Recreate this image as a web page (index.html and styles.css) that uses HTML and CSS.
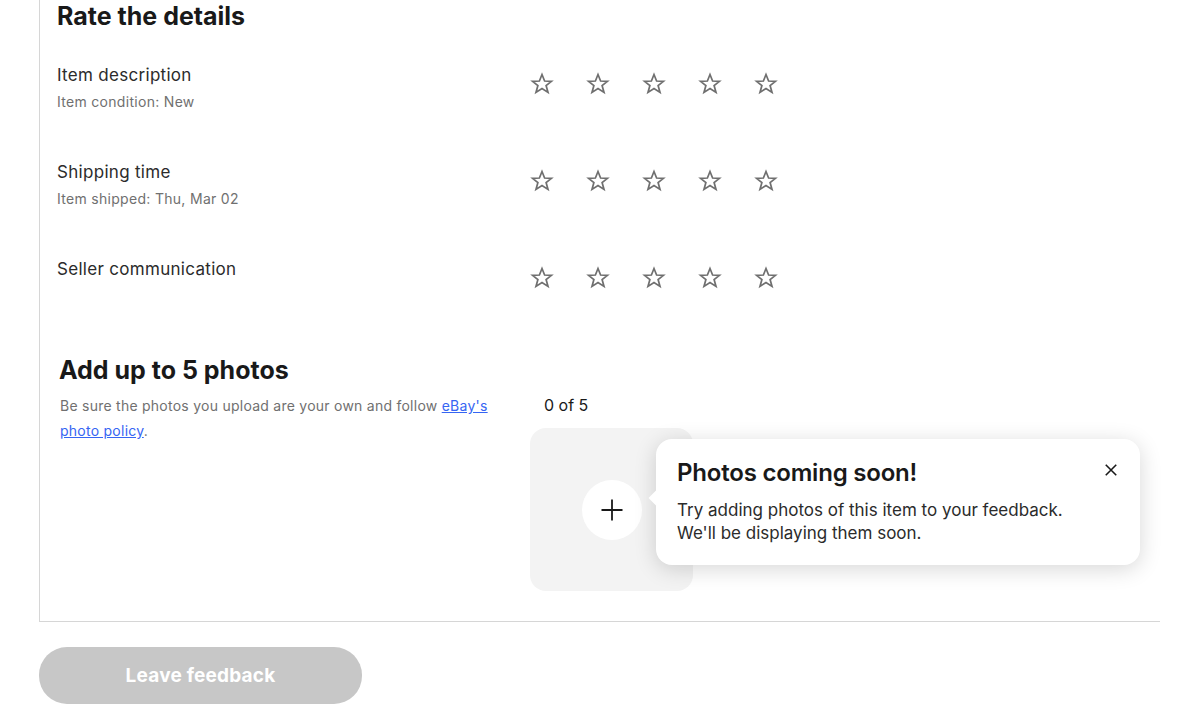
FILE: index.html
```html
<!DOCTYPE html>
<html lang="en">
<head>
    <meta charset="UTF-8">
    <meta name="viewport" content="width=device-width, initial-scale=1.0">
    <title>Leave feedback</title>
    <link rel="stylesheet" href="styles.css">
</head>
<body>
    <div class="page">
        <div class="card">
            <h2 class="heading">Rate the details</h2>

            <!-- Oceny szczegolowe -->
            <div class="rate-row">
                <div class="rate-label">
                    <div class="rate-title">Item description</div>
                    <div class="rate-sub">Item condition: New</div>
                </div>
                <div class="stars">
                    <svg class="star" viewBox="0 0 24 24"><polygon points="12,2.5 14.6,9 21.5,9.3 16.1,13.6 18,20.4 12,16.5 6,20.4 7.9,13.6 2.5,9.3 9.4,9"/></svg>
                    <svg class="star" viewBox="0 0 24 24"><polygon points="12,2.5 14.6,9 21.5,9.3 16.1,13.6 18,20.4 12,16.5 6,20.4 7.9,13.6 2.5,9.3 9.4,9"/></svg>
                    <svg class="star" viewBox="0 0 24 24"><polygon points="12,2.5 14.6,9 21.5,9.3 16.1,13.6 18,20.4 12,16.5 6,20.4 7.9,13.6 2.5,9.3 9.4,9"/></svg>
                    <svg class="star" viewBox="0 0 24 24"><polygon points="12,2.5 14.6,9 21.5,9.3 16.1,13.6 18,20.4 12,16.5 6,20.4 7.9,13.6 2.5,9.3 9.4,9"/></svg>
                    <svg class="star" viewBox="0 0 24 24"><polygon points="12,2.5 14.6,9 21.5,9.3 16.1,13.6 18,20.4 12,16.5 6,20.4 7.9,13.6 2.5,9.3 9.4,9"/></svg>
                </div>
            </div>

            <div class="rate-row">
                <div class="rate-label">
                    <div class="rate-title">Shipping time</div>
                    <div class="rate-sub">Item shipped: Thu, Mar 02</div>
                </div>
                <div class="stars">
                    <svg class="star" viewBox="0 0 24 24"><polygon points="12,2.5 14.6,9 21.5,9.3 16.1,13.6 18,20.4 12,16.5 6,20.4 7.9,13.6 2.5,9.3 9.4,9"/></svg>
                    <svg class="star" viewBox="0 0 24 24"><polygon points="12,2.5 14.6,9 21.5,9.3 16.1,13.6 18,20.4 12,16.5 6,20.4 7.9,13.6 2.5,9.3 9.4,9"/></svg>
                    <svg class="star" viewBox="0 0 24 24"><polygon points="12,2.5 14.6,9 21.5,9.3 16.1,13.6 18,20.4 12,16.5 6,20.4 7.9,13.6 2.5,9.3 9.4,9"/></svg>
                    <svg class="star" viewBox="0 0 24 24"><polygon points="12,2.5 14.6,9 21.5,9.3 16.1,13.6 18,20.4 12,16.5 6,20.4 7.9,13.6 2.5,9.3 9.4,9"/></svg>
                    <svg class="star" viewBox="0 0 24 24"><polygon points="12,2.5 14.6,9 21.5,9.3 16.1,13.6 18,20.4 12,16.5 6,20.4 7.9,13.6 2.5,9.3 9.4,9"/></svg>
                </div>
            </div>

            <div class="rate-row">
                <div class="rate-label">
                    <div class="rate-title">Seller communication</div>
                </div>
                <div class="stars">
                    <svg class="star" viewBox="0 0 24 24"><polygon points="12,2.5 14.6,9 21.5,9.3 16.1,13.6 18,20.4 12,16.5 6,20.4 7.9,13.6 2.5,9.3 9.4,9"/></svg>
                    <svg class="star" viewBox="0 0 24 24"><polygon points="12,2.5 14.6,9 21.5,9.3 16.1,13.6 18,20.4 12,16.5 6,20.4 7.9,13.6 2.5,9.3 9.4,9"/></svg>
                    <svg class="star" viewBox="0 0 24 24"><polygon points="12,2.5 14.6,9 21.5,9.3 16.1,13.6 18,20.4 12,16.5 6,20.4 7.9,13.6 2.5,9.3 9.4,9"/></svg>
                    <svg class="star" viewBox="0 0 24 24"><polygon points="12,2.5 14.6,9 21.5,9.3 16.1,13.6 18,20.4 12,16.5 6,20.4 7.9,13.6 2.5,9.3 9.4,9"/></svg>
                    <svg class="star" viewBox="0 0 24 24"><polygon points="12,2.5 14.6,9 21.5,9.3 16.1,13.6 18,20.4 12,16.5 6,20.4 7.9,13.6 2.5,9.3 9.4,9"/></svg>
                </div>
            </div>

            <!-- Zdjecia -->
            <h2 class="heading photos-heading">Add up to 5 photos</h2>
            <div class="photos">
                <p class="photos-note">
                    Be sure the photos you upload are your own and follow <a href="#">eBay's photo policy</a>.
                </p>
                <div class="photos-upload">
                    <div class="photos-count">0 of 5</div>
                    <div class="tile">
                        <button class="add-btn" type="button" aria-label="Add photo">
                            <svg viewBox="0 0 24 24" width="24" height="24"><path d="M12 1.5v21M1.5 12h21" stroke="#191919" stroke-width="1.8" fill="none"/></svg>
                        </button>
                        <div class="tooltip">
                            <span class="tooltip-arrow"></span>
                            <div class="tooltip-title">Photos coming soon!</div>
                            <div class="tooltip-text">Try adding photos of this item to your feedback.<br>We'll be displaying them soon.</div>
                            <button class="tooltip-close" type="button" aria-label="Close">
                                <svg viewBox="0 0 16 16" width="14" height="14"><path d="M2 2l12 12M14 2L2 14" stroke="#191919" stroke-width="1.8" fill="none"/></svg>
                            </button>
                        </div>
                    </div>
                </div>
            </div>
        </div>

        <button class="submit" type="button" disabled>Leave feedback</button>
    </div>
</body>
</html>
```

FILE: styles.css
```css
body {
    margin: 0;
    font-family: Inter, "Open Sans", Arial, sans-serif;
    color: #191919;
    background: #fff;
}
.page {
    padding-left: 39px;
    width: 1121px;
}
.card {
    border-left: 1px solid #d6d6d6;
    border-bottom: 1px solid #d6d6d6;
    padding: 0 0 30px 17px;
}
.heading {
    margin: 0;
    font-size: 25px;
    line-height: 32px;
    font-weight: 700;
    letter-spacing: 0;
}
.rate-row {
    display: flex;
    height: 97px;
}
.rate-row:first-of-type {
    margin-top: 31px;
}
.rate-label {
    width: 473px;
}
.rate-title {
    font-size: 17px;
    line-height: 24px;
    letter-spacing: 0.3px;
    color: #2b2b2b;
}
.rate-sub {
    margin-top: 5px;
    font-size: 14px;
    line-height: 20px;
    letter-spacing: 0.3px;
    color: #707070;
}
.stars {
    display: flex;
    gap: 32px;
    padding-top: 9px;
    height: 24px;
}
.star {
    width: 24px;
    height: 24px;
    fill: none;
    stroke: #6f6f6f;
    stroke-width: 1.7;
    stroke-linejoin: miter;
}
.photos-heading {
    margin-left: 2px;
}
.photos {
    display: flex;
    margin-top: 7px;
}
.photos-note {
    width: 445px;
    margin: 0 25px 0 3px;
    font-size: 14px;
    line-height: 25px;
    letter-spacing: 0.25px;
    color: #707070;
}
.photos-note a {
    color: #3665f3;
}
.photos-count {
    font-size: 16px;
    line-height: 24px;
    padding-left: 14px;
}
.tile {
    position: relative;
    margin-top: 11px;
    width: 163px;
    height: 163px;
    border-radius: 16px;
    background: #f3f3f3;
    display: flex;
    align-items: center;
    justify-content: center;
}
.add-btn {
    width: 60px;
    height: 60px;
    border: none;
    border-radius: 50%;
    background: #fff;
    display: flex;
    align-items: center;
    justify-content: center;
    padding: 0;
    cursor: pointer;
}
.tooltip {
    position: absolute;
    left: 126px;
    top: 11px;
    width: 484px;
    height: 126px;
    box-sizing: border-box;
    padding: 20px 21px 0;
    background: #fff;
    border-radius: 16px;
    box-shadow: 0 4px 22px rgba(0, 0, 0, 0.16);
}
.tooltip-arrow {
    position: absolute;
    left: -5px;
    top: 53px;
    width: 12px;
    height: 12px;
    background: #fff;
    transform: rotate(45deg);
}
.tooltip-title {
    position: relative;
    font-size: 24px;
    line-height: 28px;
    font-weight: 600;
    letter-spacing: -0.2px;
}
.tooltip-text {
    margin-top: 12px;
    font-size: 17px;
    line-height: 23px;
    color: #2b2b2b;
}
.tooltip-close {
    position: absolute;
    top: 24px;
    right: 22px;
    border: none;
    background: none;
    padding: 0;
    width: 14px;
    height: 14px;
    cursor: pointer;
}
.submit {
    margin-top: 25px;
    width: 323px;
    height: 57px;
    border: none;
    border-radius: 28px;
    background: #c7c7c7;
    color: #fff;
    font-family: inherit;
    font-size: 19px;
    font-weight: 700;
    letter-spacing: 0.2px;
}
```
